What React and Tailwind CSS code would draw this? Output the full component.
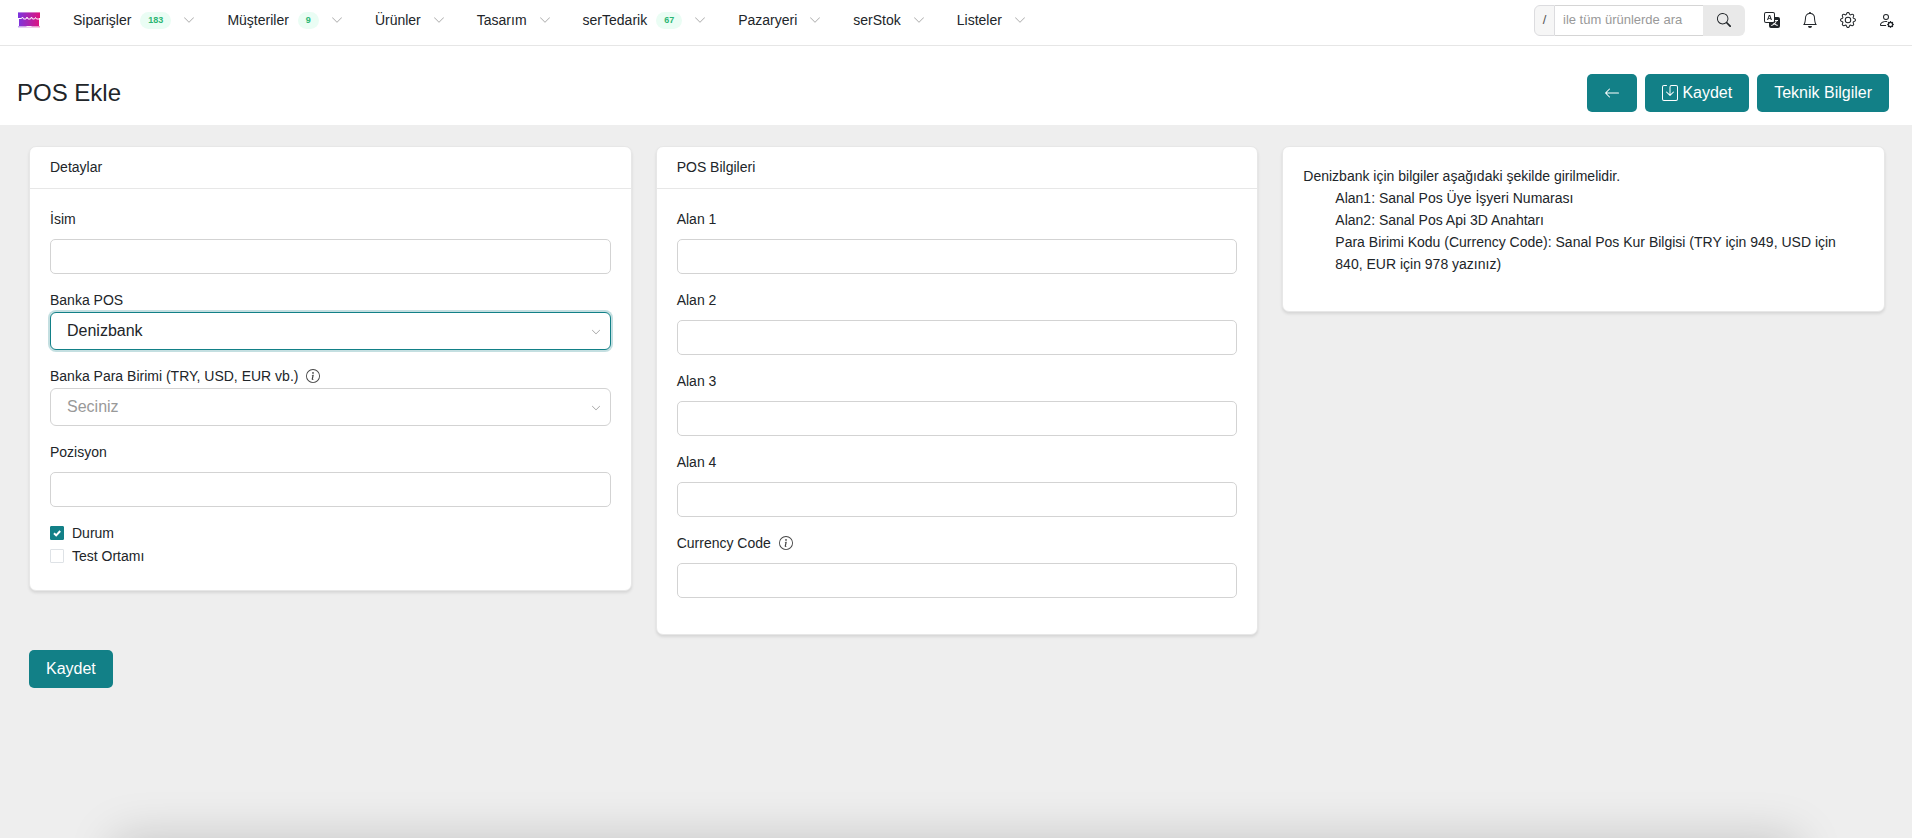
import { BsArrowLeft, BsBell, BsChevronDown, BsGear, BsInfoCircle, BsPersonGear, BsSave, BsSearch, BsTranslate } from 'react-icons/bs';

const menu = [
  { label: 'Siparişler', count: 183 },
  { label: 'Müşteriler', count: 9 },
  { label: 'Ürünler' },
  { label: 'Tasarım' },
  { label: 'serTedarik', count: 67 },
  { label: 'Pazaryeri' },
  { label: 'serStok' },
  { label: 'Listeler' },
];

const Logo = () => (
  <svg width="22" height="16" viewBox="0 0 22 16" aria-hidden="true">
    <defs>
      <linearGradient id="logo-fill" x1="0" y1="0" x2="22" y2="0" gradientUnits="userSpaceOnUse">
        <stop offset="0" stopColor="#7a35e0" />
        <stop offset="1" stopColor="#e0127c" />
      </linearGradient>
    </defs>
    <path d="M0 0h22v6H0z" fill="url(#logo-fill)" />
    <path d="M1 5h20v9H1z" fill="url(#logo-fill)" />
    <path d="M0 0h22v1H0z" fill="#fff" opacity="0.4" />
    <path d="M1 6.500h2.500l1-1.500 1 2h2.500l1-2 1 2h2.500l1-2 1 2h2l1-1.500 1 1.500H21" fill="none" stroke="#fff" strokeWidth="1" />
    <path d="M0 14h22v1.500H0z" fill="url(#logo-fill)" opacity="0.45" />
    <path d="M8.500 14h5v1h-5z" fill="#fff" opacity="0.8" />
  </svg>
);

const Navbar = () => {
  return (
    <header className="h-[46px] bg-white border-b border-[#e6e6e6] px-[18px] pb-[5px] flex items-center justify-between">
      <div className="flex items-center">
        <a href="#" aria-label="Ana sayfa" className="mr-[33px]">
          <Logo />
        </a>
        <nav className="flex items-center gap-8">
          {menu.map((item) => (
            <a key={item.label} href="#" className="flex items-center">
              {item.label}
              {item.count && (
                <span className="ml-[9px] h-[17px] px-2 rounded-full bg-[#eafdf4] text-[#2bb673] text-[9px] font-bold flex items-center">
                  {item.count}
                </span>
              )}
              <BsChevronDown size={12} className="ml-3 text-[#aaa]" />
            </a>
          ))}
        </nav>
      </div>

      <div className="flex items-center gap-[19px]">
        <form className="flex h-[31px] text-[13px]">
          <label htmlFor="search" className="w-[21px] flex items-center justify-center rounded-l-md border border-[#dcdcdf] bg-[#f6f6f6] text-[#555]">
            /
          </label>
          <input id="search" type="text" placeholder="ile tüm ürünlerde ara" className="w-[148px] px-2 border-y border-[#d5d5d5] bg-white placeholder:text-[#999] outline-none" />
          <button type="button" aria-label="Ara" className="w-[42px] flex items-center justify-center rounded-r-md bg-[#e9e9e9]">
            <BsSearch size={14} />
          </button>
        </form>
        <div className="flex items-center gap-[22px]">
          <button type="button" aria-label="Dil"><BsTranslate size={16} /></button>
          <button type="button" aria-label="Bildirimler"><BsBell size={16} /></button>
          <button type="button" aria-label="Ayarlar"><BsGear size={16} /></button>
          <button type="button" aria-label="Hesap"><BsPersonGear size={16} /></button>
        </div>
      </div>
    </header>
  );
};

const Button = ({ children, ...props }) => (
  <button type="button" className="h-[38px] px-[17px] rounded-[5px] bg-[#128087] text-white text-base flex items-center gap-1" {...props}>
    {children}
  </button>
);

const Card = ({ title, children }) => (
  <section className="bg-white border border-[#e7e7e7] rounded-[7px] shadow-[0_2px_3px_rgba(0,0,0,0.1)]">
    {title && <h2 className="h-[42px] px-5 pb-[2px] flex items-center border-b border-[#e7e7e7]">{title}</h2>}
    {children}
  </section>
);

const Label = ({ id, text, info }) => (
  <label htmlFor={id} className="h-[21px] flex items-center gap-2">
    {text}
    {info && <BsInfoCircle size={14} className="text-[#444]" />}
  </label>
);

const TextField = ({ id, label, info }) => (
  <div className="flex flex-col gap-[10px]">
    <Label id={id} text={label} info={info} />
    <input id={id} type="text" className="h-[35px] w-full px-3 rounded-[5px] border border-[#d3d3d3] bg-white outline-none" />
  </div>
);

const SelectField = ({ id, label, info, options, active }) => (
  <div className="flex flex-col gap-[2px]">
    <Label id={id} text={label} info={info} />
    <div className="relative">
      <select
        id={id}
        className={`h-[38px] w-full px-4 rounded-md border bg-white text-base appearance-none outline-none ${active ? 'border-[#128087] shadow-[0_0_0_2px_rgba(18,128,135,0.25)]' : 'border-[#d3d3d3] text-[#999]'}`}
      >
        {options.map((option) => (
          <option key={option}>{option}</option>
        ))}
      </select>
      <BsChevronDown size={10} className="absolute right-[10px] top-[15px] text-[#888] pointer-events-none" />
    </div>
  </div>
);

const CheckField = ({ id, label, defaultChecked }) => (
  <label htmlFor={id} className="h-[21px] flex items-center gap-2">
    <span className="relative flex">
      <input id={id} type="checkbox" defaultChecked={defaultChecked} className="peer size-[14px] rounded-[1px] border border-[#dee2e6] bg-white appearance-none checked:bg-[#128087] checked:border-[#128087]" />
      <svg viewBox="0 0 14 14" className="absolute inset-0 hidden peer-checked:block pointer-events-none" fill="none" stroke="#fff" strokeWidth="2">
        <path d="M4 7.200l2.200 2.200L10.200 5" />
      </svg>
    </span>
    {label}
  </label>
);

const App = () => {
  return (
    <div className="min-h-screen bg-[#eee] text-[#212529] text-sm font-['Liberation_Sans',Arial,sans-serif]">
      <Navbar />

      <div className="bg-white h-[79px] pt-[14px] pl-[17px] pr-[23px] flex items-center justify-between">
        <h1 className="text-2xl">POS Ekle</h1>
        <div className="flex gap-2">
          <Button aria-label="Geri"><BsArrowLeft size={16} /></Button>
          <Button><BsSave size={16} />Kaydet</Button>
          <Button>Teknik Bilgiler</Button>
        </div>
      </div>

      <main className="pl-[29px] pr-[27px] pt-[21px]">
        <div className="grid grid-cols-3 gap-6 items-start">
          <Card title="Detaylar">
            <div className="px-5 pt-[19px] pb-6 flex flex-col gap-[15px]">
              <TextField id="name" label="İsim" />
              <SelectField id="bank" label="Banka POS" options={['Denizbank']} active />
              <SelectField id="currency" label="Banka Para Birimi (TRY, USD, EUR vb.)" options={['Seciniz']} info />
              <TextField id="position" label="Pozisyon" />
              <div className="flex flex-col gap-[2px]">
                <CheckField id="status" label="Durum" defaultChecked />
                <CheckField id="test" label="Test Ortamı" />
              </div>
            </div>
          </Card>

          <Card title="POS Bilgileri">
            <div className="px-5 pt-[19px] pb-9 flex flex-col gap-[15px]">
              <TextField id="field1" label="Alan 1" />
              <TextField id="field2" label="Alan 2" />
              <TextField id="field3" label="Alan 3" />
              <TextField id="field4" label="Alan 4" />
              <TextField id="code" label="Currency Code" info />
            </div>
          </Card>

          <Card>
            <div className="px-5 pt-[18px] pb-9 leading-[22px]">
              <p>Denizbank için bilgiler aşağıdaki şekilde girilmelidir.</p>
              <ul className="pl-8 pr-2">
                <li>Alan1: Sanal Pos Üye İşyeri Numarası</li>
                <li>Alan2: Sanal Pos Api 3D Anahtarı</li>
                <li>Para Birimi Kodu (Currency Code): Sanal Pos Kur Bilgisi (TRY için 949, USD için 840, EUR için 978 yazınız)</li>
              </ul>
            </div>
          </Card>
        </div>

        <div className="pt-[15px] flex">
          <Button>Kaydet</Button>
        </div>
      </main>

      <div className="fixed top-full inset-x-[115px] h-16 shadow-[0_0_48px_rgba(0,0,0,0.175)]" />
    </div>
  );
};

export default App;
